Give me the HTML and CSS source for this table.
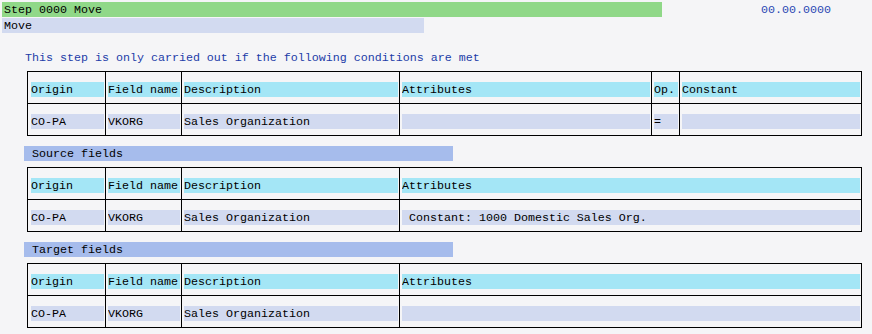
FILE: index.html
```html
<!DOCTYPE html>
<html>
<head>
<meta charset="utf-8">
<link rel="stylesheet" href="styles.css">
</head>
<body>
<div class="top">
  <div class="step">Step 0000 Move</div>
  <div class="date">00.00.0000</div>
</div>
<div class="subbar">Move</div>
<div class="intro">This step is only carried out if the following conditions are met</div>

<div class="grid g6">
  <div class="c"><span class="h">Origin</span></div>
  <div class="c"><span class="h">Field name</span></div>
  <div class="c"><span class="h">Description</span></div>
  <div class="c"><span class="h">Attributes</span></div>
  <div class="c"><span class="h">Op.</span></div>
  <div class="c"><span class="h">Constant</span></div>
  <div class="c r2"><span class="d">CO-PA</span></div>
  <div class="c r2"><span class="d">VKORG</span></div>
  <div class="c r2"><span class="d">Sales Organization</span></div>
  <div class="c r2"><span class="d"></span></div>
  <div class="c r2"><span class="d">=</span></div>
  <div class="c r2"><span class="d"></span></div>
</div>

<div class="section">Source fields</div>
<div class="grid g4">
  <div class="c"><span class="h">Origin</span></div>
  <div class="c"><span class="h">Field name</span></div>
  <div class="c"><span class="h">Description</span></div>
  <div class="c"><span class="h">Attributes</span></div>
  <div class="c r2"><span class="d">CO-PA</span></div>
  <div class="c r2"><span class="d">VKORG</span></div>
  <div class="c r2"><span class="d">Sales Organization</span></div>
  <div class="c r2"><span class="d"> Constant: 1000 Domestic Sales Org.</span></div>
</div>

<div class="section">Target fields</div>
<div class="grid g4">
  <div class="c"><span class="h">Origin</span></div>
  <div class="c"><span class="h">Field name</span></div>
  <div class="c"><span class="h">Description</span></div>
  <div class="c"><span class="h">Attributes</span></div>
  <div class="c r2"><span class="d">CO-PA</span></div>
  <div class="c r2"><span class="d">VKORG</span></div>
  <div class="c r2"><span class="d">Sales Organization</span></div>
  <div class="c r2"><span class="d"></span></div>
</div>
</body>
</html>
```

FILE: styles.css
```css
html, body {
  margin: 0;
  padding: 0;
  background: #f5f5f7;
}
body {
  padding-top: 2px;
  font-family: "Liberation Mono", "Courier New", monospace;
  font-size: 11.67px;
  line-height: 14px;
  color: #000;
}
.top {
  display: flex;
  height: 15px;
}
.step {
  margin-left: 2px;
  width: 660px;
  padding-left: 2px;
  padding-top: 1px;
  height: 15px;
  box-sizing: border-box;
  background: #90d888;
  white-space: pre;
}
.date {
  margin-left: 99px;
  padding-top: 1px;
  color: #2a48b4;
  white-space: pre;
}
.subbar {
  margin-top: 1px;
  margin-left: 2px;
  width: 422px;
  padding-left: 2px;
  padding-top: 1px;
  box-sizing: border-box;
  height: 15px;
  background: #d2daf0;
}
.intro {
  margin-top: 18px;
  margin-left: 25px;
  height: 15px;
  line-height: 15px;
  color: #1c3ca8;
  white-space: pre;
}
.grid {
  display: grid;
  margin-left: 27px;
  width: 835px;
  box-sizing: border-box;
  border: 1px solid #000;
}
.g6 {
  margin-top: 5px;
  grid-template-columns: 77px 76px 218px 252px 28px 182px;
}
.g4 {
  margin-top: 6px;
  grid-template-columns: 77px 76px 218px 462px;
}
.c {
  box-sizing: border-box;
  height: 31px;
  padding: 10px 1px 6px 2px;
  border-left: 1px solid #000;
  display: flex;
}
.c:nth-child(6n+1) { border-left: none; padding-left: 3px; }
.g4 .c { border-left: 1px solid #000; padding-left: 2px; }
.g4 .c:nth-child(4n+1) { border-left: none; padding-left: 3px; }
.r2 { border-top: 1px solid #000; height: 32px; padding-top: 10px; }
.h, .d {
  display: block;
  flex: 1;
  height: 15px;
  padding-top: 1px;
  box-sizing: border-box;
  overflow: hidden;
  white-space: pre;
}
.h { background: #a4e6f6; }
.d { background: #d2daf0; }
.section {
  margin-top: 10px;
  margin-left: 24px;
  width: 429px;
  padding-left: 8px;
  padding-top: 1px;
  box-sizing: border-box;
  height: 15px;
  background: #a6bcec;
  white-space: pre;
}
```
